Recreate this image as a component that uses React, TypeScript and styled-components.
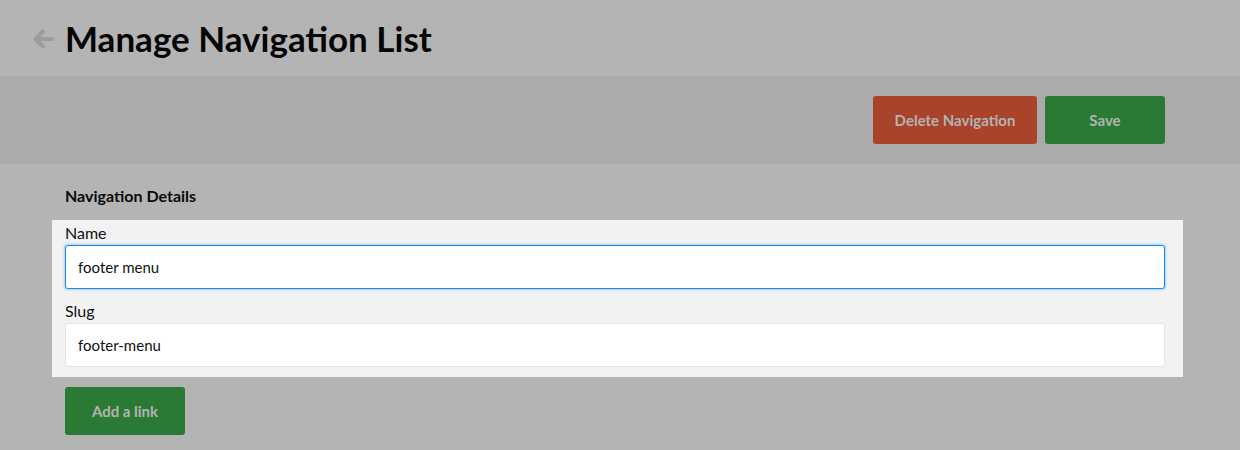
import React from "react";
import styled, { createGlobalStyle } from "styled-components";

const Global = createGlobalStyle`
  html, body { margin: 0; padding: 0; }
  body {
    background: #b4b4b4;
    font-family: Lato, "Open Sans", sans-serif;
    color: #111;
  }
`;

const Page = styled.div`
  width: 1240px;
  height: 450px;
  overflow: hidden;
  background: #b4b4b4;
`;

const Header = styled.header`
  height: 76px;
  display: flex;
  align-items: center;
  padding-left: 32px;
  gap: 10px;
  box-sizing: border-box;
`;

const BackIcon = styled.svg`
  width: 23px;
  height: 22px;
  flex: none;
  margin-top: 1px;
`;

const Title = styled.h1`
  margin: 0;
  font-size: 35px;
  font-weight: 700;
  line-height: 40px;
  color: #050505;
`;

const ActionBar = styled.div`
  height: 88px;
  background: #ababab;
  display: flex;
  justify-content: flex-end;
  align-items: center;
  gap: 8px;
  padding-right: 75px;
  box-sizing: border-box;
`;

const Button = styled.button<{ $tone: "danger" | "success"; $w: number }>`
  width: ${(p) => p.$w}px;
  height: 48px;
  border: none;
  border-radius: 3px;
  background: ${(p) => (p.$tone === "danger" ? "#a9432a" : "#2b7a33")};
  color: #b3b3b3;
  font-family: Lato, sans-serif;
  font-weight: 700;
  font-size: 15px;
  padding: 0;
  cursor: pointer;
`;

const Content = styled.section`
  padding: 0 75px 0 65px;
`;

const SectionTitle = styled.h2`
  margin: 0;
  padding-top: 22px;
  height: 56px;
  box-sizing: border-box;
  font-size: 16px;
  line-height: 20px;
  font-weight: 700;
  color: #0a0a0a;
`;

const Highlight = styled.div`
  background: #f2f2f2;
  margin: 0 -18px 0 -13px;
  padding: 3px 18px 10px 13px;
`;

const Field = styled.div<{ $first?: boolean }>`
  display: flex;
  flex-direction: column;
  margin-top: ${(p) => (p.$first ? 0 : 12)}px;
`;

const Label = styled.label`
  font-size: 16px;
  line-height: 20px;
  color: #111;
  margin-bottom: 2px;
`;

const Input = styled.input<{ $focused?: boolean }>`
  height: 44px;
  box-sizing: border-box;
  border: 1px solid ${(p) => (p.$focused ? "#1a8cf0" : "#e6e6e6")};
  box-shadow: ${(p) => (p.$focused ? "0 0 2px 1px rgba(26,140,240,0.35)" : "none")};
  border-radius: 3px;
  background: #fff;
  padding: 0 12px;
  font-family: Lato, sans-serif;
  font-size: 15px;
  color: #111;
  outline: none;
`;

const Footer = styled.div`
  padding-top: 10px;
`;

export default function App() {
  return (
    <Page>
      <Global />
      <Header>
        <BackIcon viewBox="0 0 23 22">
          <path
            d="M20.5 11H3.5M11 3.5L3.5 11l7.5 7.5"
            fill="none"
            stroke="#9c9c9c"
            strokeWidth="4.2"
            strokeLinecap="round"
            strokeLinejoin="round"
          />
        </BackIcon>
        <Title>Manage Navigation List</Title>
      </Header>
      <ActionBar>
        <Button $tone="danger" $w={164}>Delete Navigation</Button>
        <Button $tone="success" $w={120}>Save</Button>
      </ActionBar>
      <Content>
        <SectionTitle>Navigation Details</SectionTitle>
        <Highlight>
          <Field $first>
            <Label>Name</Label>
            <Input $focused defaultValue="footer menu" />
          </Field>
          <Field>
            <Label>Slug</Label>
            <Input defaultValue="footer-menu" />
          </Field>
        </Highlight>
        <Footer>
          <Button $tone="success" $w={120}>Add a link</Button>
        </Footer>
      </Content>
    </Page>
  );
}
